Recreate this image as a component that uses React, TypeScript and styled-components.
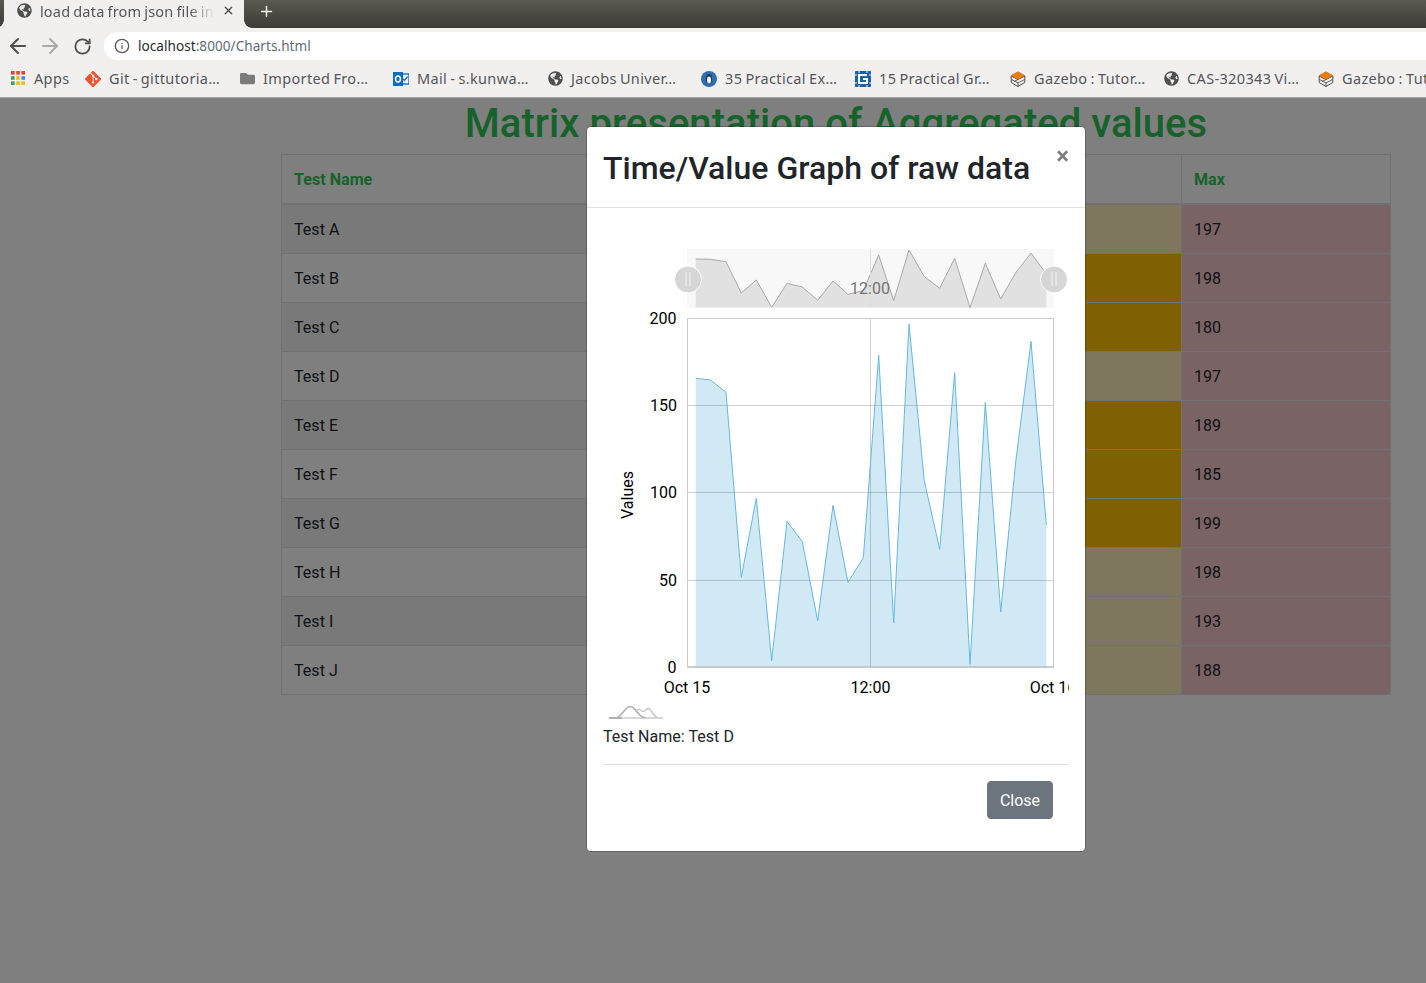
import React from "react";
import styled, { createGlobalStyle } from "styled-components";
import { ArrowLeft, ArrowRight, RotateCw, Info, Plus, X } from "lucide-react";
import { FaGlobeAmericas, FaFolder } from "react-icons/fa";
import { SiGit } from "react-icons/si";

const Global = createGlobalStyle`
  html, body { margin: 0; padding: 0; background: #fff; }
  body { font-family: Roboto, "Liberation Sans", sans-serif; color: #212529; font-size: 16px; line-height: 24px; letter-spacing: .05px; }
  * { box-sizing: border-box; }
`;

const Shell = styled.div`
  width: 1426px;
  height: 983px;
  overflow: hidden;
  display: flex;
  flex-direction: column;
`;

const UI_FONT = `"Noto Sans", "Open Sans", sans-serif`;

const TabStrip = styled.div`
  height: 28px;
  flex: none;
  background: linear-gradient(#5b5850, #3e3c37);
  display: flex;
  align-items: stretch;
  padding-left: 4px;
  font-family: ${UI_FONT};
`;

const Tab = styled.div`
  position: relative;
  width: 240px;
  background: #f1f0ef;
  display: flex;
  align-items: center;
  padding: 0 9px 7px 13px;
  gap: 8px;
  color: #4a4a4a;
  &::before, &::after {
    content: "";
    position: absolute;
    bottom: 0;
    width: 8px;
    height: 8px;
  }
  &::before { left: -8px; background: radial-gradient(circle at 0 0, transparent 7.5px, #f1f0ef 8px); }
  &::after { right: -8px; background: radial-gradient(circle at 100% 0, transparent 7.5px, #f1f0ef 8px); }
`;

const TabTitle = styled.div`
  width: 175px;
  font-size: 14.5px;
  letter-spacing: 0.2px;
  word-spacing: -1px;
  line-height: 20px;
  white-space: nowrap;
  overflow: hidden;
  color: #55565a;
  mask-image: linear-gradient(to right, #000 150px, transparent 175px);
`;

const NewTab = styled.div`
  display: flex;
  align-items: center;
  padding: 0 0 6px 14px;
  color: #f0f0f0;
`;

const Toolbar = styled.div`
  height: 32px;
  flex: none;
  background: #f1f0ef;
  display: flex;
  align-items: flex-end;
  padding-left: 2px;
`;

const NavIcon = styled.div<{ $off?: boolean }>`
  width: 32px;
  height: 28px;
  display: flex;
  align-items: center;
  justify-content: center;
  color: ${(p) => (p.$off ? "#a9a9a9" : "#505050")};
`;

const Address = styled.div`
  margin-left: 6px;
  flex: 1;
  height: 28px;
  background: #fff;
  border-radius: 14px 0 0 14px;
  display: flex;
  align-items: center;
  padding-left: 10px;
  gap: 8px;
  font-family: ${UI_FONT};
  font-size: 13.55px;
  color: #5f6b78;
  svg { color: #5a5a5a; }
`;

const Host = styled.span`
  color: #2b2b2b;
`;

const Bookmarks = styled.div`
  height: 38px;
  flex: none;
  background: #f1f0ef;
  border-bottom: 1px solid #a3a3a3;
  display: flex;
  align-items: center;
  padding: 0 0 0 11px;
  font-family: ${UI_FONT};
  overflow: hidden;
`;

const Bookmark = styled.div<{ $w: number }>`
  flex: none;
  width: ${(p) => p.$w}px;
  display: flex;
  align-items: center;
  gap: 8px;
  font-size: 14.5px;
  letter-spacing: 0.35px;
  word-spacing: -1px;
  color: #55565a;
  white-space: nowrap;
  svg { flex: none; }
`;

const BookmarkLabel = styled.span`
  margin-top: -2px;
`;

const Page = styled.main`
  position: relative;
  flex: 1;
  padding: 2px 35px 0 281px;
  background: #fff;
`;

const Heading = styled.h1`
  margin: 0 0 6px;
  text-align: center;
  font-size: 40px;
  line-height: 48px;
  font-weight: 500;
  letter-spacing: 0.05px;
  color: #2fc457;
`;

const Table = styled.table`
  width: 100%;
  border-collapse: collapse;
  table-layout: fixed;
`;

const Th = styled.th<{ $w?: number }>`
  ${(p) => (p.$w ? `width: ${p.$w}px;` : "")}
  border: 1px solid #dee2e6;
  border-bottom-width: 2px;
  padding: 13px 12px 10px;
  text-align: left;
  color: #2fc457;
  font-weight: 700;
  height: 49px;
`;

const Row = styled.tr<{ $odd: boolean }>`
  background: ${(p) => (p.$odd ? "rgba(0,0,0,.05)" : "transparent")};
`;

const Td = styled.td<{ $bg?: string }>`
  border: 1px solid #dee2e6;
  padding: 13px 12px 11px;
  height: 49px;
  ${(p) => (p.$bg ? `background: ${p.$bg};` : "")}
`;

const Backdrop = styled.div`
  position: absolute;
  inset: 0;
  background: rgba(0, 0, 0, 0.5);
`;

const Modal = styled.section`
  position: absolute;
  top: 28px;
  left: 586px;
  width: 500px;
  background: #fff;
  border: 1px solid rgba(0, 0, 0, 0.2);
  border-radius: 4.8px;
  background-clip: padding-box;
`;

const ModalHeader = styled.header`
  display: flex;
  align-items: flex-start;
  padding: 17px 16px 15px;
  border-bottom: 1px solid #dee2e6;
`;

const ModalTitle = styled.h2`
  margin: 0;
  font-size: 32px;
  line-height: 48px;
  font-weight: 500;
  letter-spacing: 0;
  color: #212529;
  white-space: nowrap;
`;

const CloseX = styled.div`
  margin: -17px -16px -15px auto;
  padding: 17px 16px 15px;
  font-size: 24px;
  line-height: 24px;
  font-weight: 700;
  color: #000;
  opacity: 0.5;
`;

const ModalBody = styled.div`
  padding: 16px;
`;

const ChartSvg = styled.svg`
  display: block;
  width: 466px;
  height: 500px;
  overflow: hidden;
  font-family: Roboto, sans-serif;
  font-size: 16px;
  letter-spacing: 0;
`;

const Caption = styled.div`
  height: 24px;
  line-height: 26px;
`;

const ModalFooter = styled.footer`
  margin-top: 16px;
  border-top: 1px solid #dee2e6;
  padding: 16px;
  display: flex;
  justify-content: flex-end;
`;

const CloseButton = styled.button`
  height: 38px;
  width: 66px;
  padding: 2px 0 0;
  border: 1px solid #6c757d;
  border-radius: 4px;
  background: #6c757d;
  color: #fff;
  font: inherit;
`;

const mainPts: [number, number][] = [
  [695.7, 378.3], [710.5, 380], [726, 392.3], [741.3, 577.3], [756.3, 498.3], [771.7, 660.7], [787, 521.3], [802.3, 541.7],
  [817.7, 620.7], [833, 505.3], [848, 582.3], [863.3, 557.7], [878.7, 355.3], [893.7, 622.7], [909, 324], [924.3, 481],
  [939.7, 549.3], [954.7, 372.7], [970, 664.3], [985.3, 402.3], [1000.7, 612], [1015.7, 462], [1031, 341.3], [1046.3, 525],
];

const navY = [259, 259.3, 261.7, 293, 280, 307.3, 283.3, 287, 300.3, 281, 294.3, 290.7, 255, 300.7, 250, 276.7, 288.3, 258.3, 307.7, 263.3, 299, 272.7, 253, 274];

const linePts = mainPts.map(([x, y]) => `${x},${y}`).join(" ");
const navPts = mainPts.map(([x], i) => `${x},${navY[i]}`).join(" ");

const Handle = ({ cx }: { cx: number }) => (
  <g>
    <circle cx={cx} cy={279.5} r={13.5} fill="#d6d6d6" stroke="#fff" strokeWidth={1} />
    <path d={`M${cx - 2} 272V286M${cx + 2} 272V286`} stroke="#f4f4f4" strokeWidth={1} />
  </g>
);

const Chart = () => (
  <ChartSvg viewBox="603 224 466 500">
    {/* navigator */}
    <rect x={687} y={249} width={367} height={59} fill="#f8f8f8" />
    <polygon points={`695.7,307.5 ${navPts} 1046.3,307.5`} fill="#e1e1e1" />
    <polyline points={navPts} fill="none" stroke="#a9a9a9" strokeWidth={1} />
    <line x1={870.5} y1={249} x2={870.5} y2={308} stroke="#ddd" />
    <text x={870} y={294} textAnchor="middle" fill="#757575">12:00</text>
    <Handle cx={688} />
    <Handle cx={1054} />

    {/* plot */}
    <polygon points={`695.7,667 ${linePts} 1046.3,667`} fill="#67b7dc" fillOpacity={0.3} />
    <path d="M687.5 405.5H1053.5M687.5 492.5H1053.5M687.5 580.5H1053.5M870.5 318.5V667" stroke="#000" strokeOpacity={0.18} fill="none" />
    <rect x={687.5} y={318.5} width={366} height={348.5} fill="none" stroke="#ccc" />
    <line x1={687.5} y1={667} x2={1053.5} y2={667} stroke="#aab4ba" />
    <polyline points={linePts} fill="none" stroke="#67b7dc" strokeWidth={1} />

    {/* axes */}
    <g fill="#000" textAnchor="end">
      <text x={676.5} y={324}>200</text>
      <text x={677} y={411}>150</text>
      <text x={677} y={498}>100</text>
      <text x={677} y={586}>50</text>
      <text x={676.5} y={673}>0</text>
    </g>
    <g fill="#000" textAnchor="middle">
      <text x={687} y={693}>Oct 15</text>
      <text x={870.5} y={693}>12:00</text>
      <text x={1053} y={693}>Oct 16</text>
      <text transform="translate(633 495) rotate(-90)">Values</text>
    </g>

    {/* logo */}
    <g fill="none" strokeLinecap="round">
      <path d="M609.5 718H622.5" stroke="#b0b0b0" strokeWidth={1.8} />
      <path d="M622.5 718H662.5" stroke="#d8d8d8" strokeWidth={1.8} />
      <path d="M616 718C622 717 625 706.5 630 706.5C636 706.5 638 717.5 645 717.5" stroke="#b0b0b0" strokeWidth={1.6} />
      <path d="M636 711.5C638 708.5 640 709 642 711C644 713 646 709 648 708.5C651 708 653 716 657 717.5" stroke="#c4c4c4" strokeWidth={1.4} />
    </g>
  </ChartSvg>
);

const GlobeIcon = ({ size = 15 }: { size?: number }) => <FaGlobeAmericas size={size} color="#4f4f4f" />;

const AppsIcon = () => {
  const colors = ["#ea4335", "#ea4335", "#ea4335", "#34a853", "#fbbc05", "#4285f4", "#34a853", "#fbbc05", "#fbbc05"];
  return (
    <svg width={15} height={15} viewBox="0 0 15 15">
      {colors.map((c, i) => (
        <rect key={i} x={(i % 3) * 5.2} y={Math.floor(i / 3) * 5.2} width={3.6} height={3.6} fill={c} />
      ))}
    </svg>
  );
};

const OutlookIcon = () => (
  <svg width={16} height={16} viewBox="0 0 16 16">
    <rect x={7} y={3} width={9} height={10} fill="#fff" stroke="#0a6cc2" strokeWidth={1.4} />
    <path d="M9.5 7.5l2 2 3-4" fill="none" stroke="#0a6cc2" strokeWidth={1.3} />
    <rect x={0} y={1} width={10} height={14} fill="#0a6cc2" />
    <ellipse cx={5} cy={8} rx={2.4} ry={3} fill="none" stroke="#fff" strokeWidth={1.5} />
  </svg>
);

const PenguinIcon = () => (
  <svg width={16} height={16} viewBox="0 0 16 16">
    <circle cx={8} cy={8} r={8} fill="#2f6db0" />
    <ellipse cx={8} cy={8} rx={3} ry={5} fill="#20344f" />
    <ellipse cx={8} cy={9} rx={2} ry={3.4} fill="#f4f6f8" />
  </svg>
);

const GraphIcon = () => (
  <svg width={16} height={16} viewBox="0 0 16 16">
    <rect x={0} y={0} width={16} height={16} rx={1} fill="#1d5fa8" />
    <path d="M4 0V2M12 0V2M4 14V16M12 14V16M0 4H2M0 12H2M14 4H16M14 12H16" stroke="#f1f0ef" strokeWidth={1} />
    <path d="M12 4H4V12H12V8H8" fill="none" stroke="#fff" strokeWidth={2} />
  </svg>
);

const GazeboIcon = () => (
  <svg width={16} height={16} viewBox="0 0 16 16">
    <path d="M8 8.5L1.2 5V11.5L8 15.5L14.8 11.5V5Z" fill="#f4f3f2" stroke="#4d4d4d" strokeWidth={1} strokeLinejoin="round" />
    <path d="M8 .8L14.8 4.6L8 8.5L1.2 4.6Z" fill="#ee7d11" stroke="#b85f0c" strokeWidth={0.6} strokeLinejoin="round" />
    <path d="M1.5 8.5L8 12M14.5 8.5L8 12V15.5M8 8.5L4 10.5" fill="none" stroke="#4d4d4d" strokeWidth={0.9} />
  </svg>
);

const bookmarks: { w: number; icon: React.ReactNode; label: string }[] = [
  { w: 74, icon: <AppsIcon />, label: "Apps" },
  { w: 155, icon: <SiGit size={16} color="#f1502f" />, label: "Git - gittutoria…" },
  { w: 153, icon: <FaFolder size={15} color="#7b7b7b" />, label: "Imported Fro…" },
  { w: 155, icon: <OutlookIcon />, label: "Mail - s.kunwa…" },
  { w: 153, icon: <GlobeIcon />, label: "Jacobs Univer…" },
  { w: 154, icon: <PenguinIcon />, label: "35 Practical Ex…" },
  { w: 155, icon: <GraphIcon />, label: "15 Practical Gr…" },
  { w: 154, icon: <GazeboIcon />, label: "Gazebo : Tutor…" },
  { w: 154, icon: <GlobeIcon />, label: "CAS-320343 Vi…" },
  { w: 154, icon: <GazeboIcon />, label: "Gazebo : Tutor…" },
];

const OLIVE = "#ffeeba";
const AMBER = "#ffc107";
const RED = "#f5c6cb";

const rows: { name: string; bg: string; max: number }[] = [
  { name: "Test A", bg: OLIVE, max: 197 },
  { name: "Test B", bg: AMBER, max: 198 },
  { name: "Test C", bg: AMBER, max: 180 },
  { name: "Test D", bg: OLIVE, max: 197 },
  { name: "Test E", bg: AMBER, max: 189 },
  { name: "Test F", bg: AMBER, max: 185 },
  { name: "Test G", bg: AMBER, max: 199 },
  { name: "Test H", bg: OLIVE, max: 198 },
  { name: "Test I", bg: OLIVE, max: 193 },
  { name: "Test J", bg: OLIVE, max: 188 },
];

export default function App() {
  return (
    <Shell>
      <Global />
      <TabStrip>
        <Tab>
          <GlobeIcon />
          <TabTitle>load data from json file in html</TabTitle>
          <X size={13} strokeWidth={2.5} color="#4a4a4a" />
        </Tab>
        <NewTab>
          <Plus size={17} strokeWidth={2} />
        </NewTab>
      </TabStrip>
      <Toolbar>
        <NavIcon><ArrowLeft size={24} strokeWidth={2} /></NavIcon>
        <NavIcon $off><ArrowRight size={24} strokeWidth={2} /></NavIcon>
        <NavIcon><RotateCw size={19} strokeWidth={2.3} /></NavIcon>
        <Address>
          <Info size={16} strokeWidth={2} />
          <span><Host>localhost</Host>:8000/Charts.html</span>
        </Address>
      </Toolbar>
      <Bookmarks>
        {bookmarks.map((b, i) => (
          <Bookmark key={i} $w={b.w}>
            {b.icon}
            <BookmarkLabel>{b.label}</BookmarkLabel>
          </Bookmark>
        ))}
      </Bookmarks>
      <Page>
        <Heading>Matrix presentation of Aggregated values</Heading>
        <Table>
          <thead>
            <tr>
              <Th $w={460}>Test Name</Th>
              <Th>Average</Th>
              <Th $w={209}>Max</Th>
            </tr>
          </thead>
          <tbody>
            {rows.map((r, i) => (
              <Row key={r.name} $odd={i % 2 === 0}>
                <Td>{r.name}</Td>
                <Td $bg={r.bg} />
                <Td $bg={RED}>{r.max}</Td>
              </Row>
            ))}
          </tbody>
        </Table>
        <Backdrop />
        <Modal>
          <ModalHeader>
            <ModalTitle>Time/Value Graph of raw data</ModalTitle>
            <CloseX>×</CloseX>
          </ModalHeader>
          <ModalBody>
            <Chart />
            <Caption>Test Name: Test D</Caption>
            <ModalFooter>
              <CloseButton>Close</CloseButton>
            </ModalFooter>
          </ModalBody>
        </Modal>
      </Page>
    </Shell>
  );
}
